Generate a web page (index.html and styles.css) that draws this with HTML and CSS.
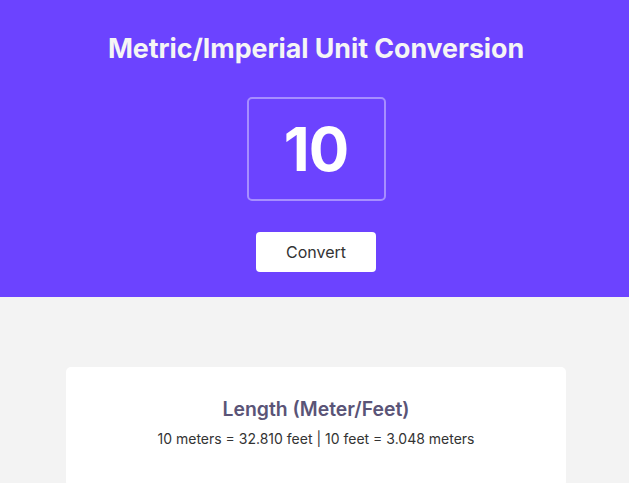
FILE: index.html
```html
<!DOCTYPE html>
<html>
<head>
<meta charset="utf-8">
<link rel="stylesheet" href="styles.css">
</head>
<body>
<header class="hero">
  <h1 class="title">Metric/Imperial Unit Conversion</h1>
  <div class="input-box">10</div>
  <button class="convert-btn">Convert</button>
</header>
<main class="results">
  <section class="card">
    <h2 class="card-title">Length (Meter/Feet)</h2>
    <p class="card-text">10 meters = 32.810 feet | 10 feet = 3.048 meters</p>
  </section>
</main>
</body>
</html>
```
FILE: styles.css
```css
* { box-sizing: border-box; }
html, body { margin: 0; padding: 0; }
body {
  font-family: Inter, "Noto Sans", sans-serif;
  background: #f3f3f3;
  color: #333;
  padding-left: 3px;
}
.hero {
  background: #6c43ff;
  display: flex;
  flex-direction: column;
  align-items: center;
  padding: 33px 0 25px;
  margin-left: -3px;
  padding-left: 3px;
}
.title {
  margin: 0;
  font-size: 26.8px;
  line-height: 31px;
  font-weight: 700;
  color: #f5f5f5;
  letter-spacing: -0.05px;
}
.input-box {
  margin-top: 33px;
  width: 139px;
  height: 104px;
  border: 2px solid rgba(255,255,255,0.4);
  border-radius: 5px;
  display: flex;
  align-items: center;
  justify-content: center;
  color: #fff;
  font-size: 60px;
  font-weight: 700;
  letter-spacing: -1px;
}
.convert-btn {
  margin-top: 31px;
  width: 120px;
  height: 40px;
  border: none;
  border-radius: 4px;
  background: #fff;
  color: #333;
  font-family: Inter, sans-serif;
  font-size: 16px;
}
.results {
  padding-top: 70px;
  display: flex;
  justify-content: center;
}
.card {
  width: 500px;
  background: #fff;
  border-radius: 5px;
  padding: 30px 20px 40px;
  text-align: center;
}
.card-title {
  margin: 0;
  font-size: 19.4px;
  line-height: 24px;
  font-weight: 600;
  color: #5a5477;
}
.card-text {
  margin: 9px 0 0;
  font-size: 14px;
  line-height: 17px;
  color: #333;
}
```
